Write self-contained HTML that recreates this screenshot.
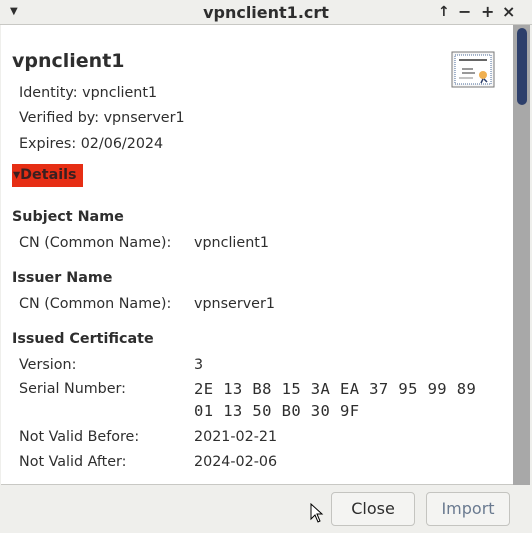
<!DOCTYPE html>
<html><head><meta charset="utf-8"><style>
*{margin:0;padding:0;box-sizing:border-box}
body{width:532px;height:533px;overflow:hidden;background:#efefec;font-family:"DejaVu Sans",sans-serif;color:#2e2e2e;position:relative}
.t{position:absolute;white-space:nowrap;font-size:14.3px;line-height:18px}
.b{font-weight:bold}
.m{font-family:"DejaVu Sans Mono",monospace;font-size:15.5px;letter-spacing:0.4px}
#title{position:absolute;left:0;top:0;width:532px;height:25px;background:#efefec;border-bottom:1px solid #c8c8c4}
#content{position:absolute;left:1px;top:25px;width:512px;height:460px;background:#fff;border-bottom:1px solid #c8c8c4}
#sb{position:absolute;left:513px;top:25px;width:17px;height:460px;background:#a8a8a8}
#thumb{position:absolute;left:517px;top:28px;width:10px;height:77px;background:#2d3f6b;border-radius:5px}
.btn{position:absolute;top:492px;height:34px;border:1px solid #c4c4c0;border-radius:4px;background:#f4f4f2;font-size:16px;text-align:center;line-height:32px}
</style></head><body>
<div id="title">
<div class="t" style="left:10px;top:3px;font-size:10px">▼</div>
<div class="t b" style="left:0;width:532px;text-align:center;top:4px;font-size:16px">vpnclient1.crt</div>
<div class="t b" style="left:438px;top:3px;font-size:14px">↑</div>
<div class="t b" style="left:458px;top:3px;font-size:16px">−</div>
<div class="t b" style="left:481px;top:3px;font-size:16px">+</div>
<div class="t b" style="left:502px;top:3px;font-size:16px">×</div>
</div>
<div id="content"></div>
<div id="sb"></div><div id="thumb"></div>
<svg style="position:absolute;left:451px;top:51px" width="44" height="38" viewBox="0 0 44 38">
<rect x="1" y="1" width="42" height="35" fill="#f6f6f6" stroke="#777"/>
<rect x="4" y="4" width="36" height="29" fill="#fff" stroke="#4a6a9a" stroke-dasharray="1 1"/>
<line x1="8" y1="9" x2="36" y2="9" stroke="#333" stroke-width="1.5"/>
<line x1="11" y1="18" x2="22" y2="18" stroke="#333"/>
<line x1="11" y1="22" x2="24" y2="22" stroke="#333"/>
<line x1="8" y1="27" x2="22" y2="27" stroke="#888"/>
<circle cx="32" cy="24" r="4" fill="#f0b050"/>
<path d="M32 28 L30 32 M33 28 L36 31" stroke="#2d3f6b" stroke-width="1.5"/>
</svg>
<div class="t b" style="left:12px;top:49px;font-size:19px;line-height:24px">vpnclient1</div>
<div class="t" style="left:19px;top:84px">Identity: vpnclient1</div>
<div class="t" style="left:19px;top:109px">Verified by: vpnserver1</div>
<div class="t" style="left:19px;top:135px">Expires: 02/06/2024</div>
<div class="t b" style="left:12px;top:164px;width:71px;height:23px;background:#e62e14;line-height:23px;padding-left:1px;color:#3a2020">▾Details</div>
<div class="t b" style="left:12px;top:208px">Subject Name</div>
<div class="t" style="left:19px;top:234px">CN (Common Name):</div>
<div class="t" style="left:194px;top:234px">vpnclient1</div>
<div class="t b" style="left:12px;top:269px">Issuer Name</div>
<div class="t" style="left:19px;top:295px">CN (Common Name):</div>
<div class="t" style="left:194px;top:295px">vpnserver1</div>
<div class="t b" style="left:12px;top:330px">Issued Certificate</div>
<div class="t" style="left:19px;top:356px">Version:</div>
<div class="t" style="left:194px;top:356px">3</div>
<div class="t" style="left:19px;top:380px">Serial Number:</div>
<div class="t m" style="left:194px;top:380px">2E 13 B8 15 3A EA 37 95 99 89</div>
<div class="t m" style="left:194px;top:402px">01 13 50 B0 30 9F</div>
<div class="t" style="left:19px;top:428px">Not Valid Before:</div>
<div class="t" style="left:194px;top:428px">2021-02-21</div>
<div class="t" style="left:19px;top:453px">Not Valid After:</div>
<div class="t" style="left:194px;top:453px">2024-02-06</div>
<svg style="position:absolute;left:310px;top:503px" width="14" height="20" viewBox="0 0 14 20"><path d="M1 1 L1 16 L5 12 L8 19 L10 18 L7 11 L12 11 Z" fill="#fff" stroke="#000"/></svg>
<div class="btn" style="left:331px;width:84px">Close</div>
<div class="btn" style="left:426px;width:84px;color:#6a7a90">Import</div>
</body></html>
